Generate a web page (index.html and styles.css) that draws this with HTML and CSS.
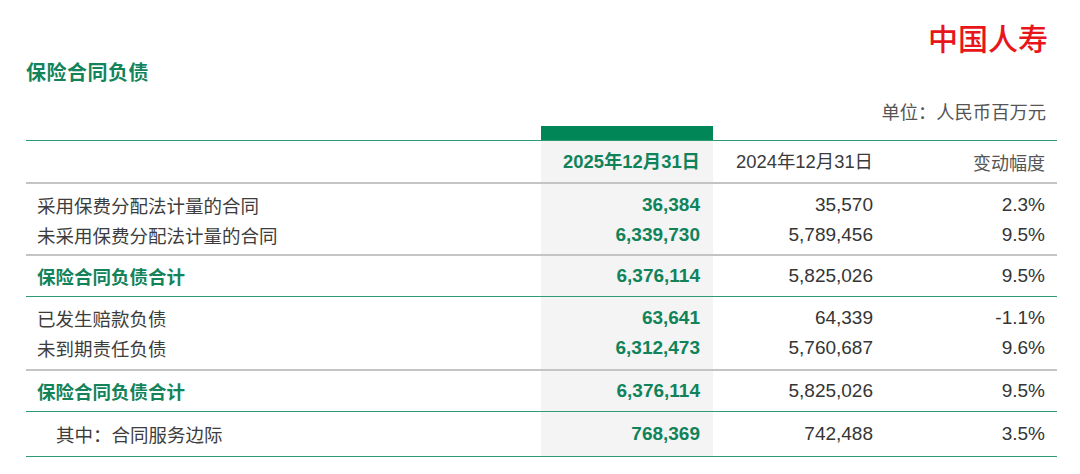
FILE: index.html
```html
<!DOCTYPE html>
<html lang="zh-CN">
<head>
<meta charset="utf-8">
<title>保险合同负债</title>
<link rel="stylesheet" href="styles.css">
</head>
<body>
<div class="page">
  <div class="brand">中国人寿</div>
  <h2 class="title">保险合同负债</h2>
  <div class="unit">单位：人民币百万元</div>
  <table class="sheet">
    <colgroup>
      <col class="c-label"><col class="c-num"><col class="c-num"><col class="c-num">
    </colgroup>
    <tr class="bar-row"><td></td><td class="bar"></td><td></td><td></td></tr>
    <tr class="head">
      <th></th>
      <th class="hl cur">2025年12月31日</th>
      <th>2024年12月31日</th>
      <th class="cjk">变动幅度</th>
    </tr>
    <tr class="row first">
      <td class="label">采用保费分配法计量的合同</td>
      <td class="hl cur">36,384</td><td>35,570</td><td>2.3%</td>
    </tr>
    <tr class="row last">
      <td class="label">未采用保费分配法计量的合同</td>
      <td class="hl cur">6,339,730</td><td>5,789,456</td><td>9.5%</td>
    </tr>
    <tr class="total">
      <td class="label">保险合同负债合计</td>
      <td class="hl cur">6,376,114</td><td>5,825,026</td><td>9.5%</td>
    </tr>
    <tr class="row first">
      <td class="label">已发生赔款负债</td>
      <td class="hl cur">63,641</td><td>64,339</td><td>-1.1%</td>
    </tr>
    <tr class="row last last2">
      <td class="label">未到期责任负债</td>
      <td class="hl cur">6,312,473</td><td>5,760,687</td><td>9.6%</td>
    </tr>
    <tr class="total total2">
      <td class="label">保险合同负债合计</td>
      <td class="hl cur">6,376,114</td><td>5,825,026</td><td>9.5%</td>
    </tr>
    <tr class="sub">
      <td class="label indent">其中：合同服务边际</td>
      <td class="hl cur">768,369</td><td>742,488</td><td>3.5%</td>
    </tr>
  </table>
</div>
</body>
</html>
```
FILE: styles.css
```css
html, body {
  margin: 0;
  padding: 0;
  background: #ffffff;
}
body {
  font-family: "Liberation Sans", "Noto Sans CJK SC", sans-serif;
  color: #353535;
}
.page {
  width: 1031px;
  padding: 20px 0 0 26px;
}
.brand {
  text-align: right;
  padding-right: 9px;
  font-family: "Noto Sans CJK SC", sans-serif;
  font-size: 30px;
  line-height: 34px;
  color: #e8151b;
  font-weight: 500;
}
.title {
  margin: 4px 0 0 0;
  font-family: "Noto Sans CJK SC", sans-serif;
  font-size: 20px;
  line-height: 28px;
  font-weight: 700;
  color: #13845a;
  letter-spacing: 0.5px;
}
.unit {
  margin-top: 13px;
  text-align: right;
  padding-right: 11px;
  font-family: "Noto Sans CJK SC", sans-serif;
  font-size: 18.3px;
  line-height: 24px;
  color: #555555;
}
.sheet {
  margin-top: 3px;
  width: 1031px;
  border-collapse: collapse;
  table-layout: fixed;
  font-size: 19px;
}
.c-label { width: 515px; }
.c-num { width: 172px; }
.sheet td, .sheet th {
  padding: 0 12px 0 0;
  text-align: right;
  white-space: nowrap;
  font-weight: 400;
  line-height: 30px;
}
.bar-row td {
  height: 14px;
  line-height: 14px;
  padding: 0;
}
.bar-row td.bar {
  background: #018657;
}
.head th {
  height: 41px;
  padding-top: 0;
  padding-bottom: 0;
  border-top: 1px solid #2f9a74;
  border-bottom: 2px solid #c4c4c4;
  color: #3a3a3a;
  font-size: 18.4px;
}
.head th.cjk {
  font-family: "Noto Sans CJK SC", sans-serif;
  font-size: 18px;
  color: #555555;
}
.hl {
  background: #f4f4f4;
}
.sheet .cur {
  color: #10835a;
  font-weight: 700;
  padding-right: 13px;
}
.label {
  text-align: left !important;
  padding-left: 11px !important;
  font-family: "Noto Sans CJK SC", sans-serif;
  font-size: 18.5px;
  color: #3d3d3d;
}
.row.first td {
  padding-top: 6px;
}
.row.last td {
  padding-bottom: 4px;
  border-bottom: 2px solid #c4c4c4;
}
.row.last2 td {
  padding-bottom: 6px;
}
.total td {
  height: 40px;
  border-bottom: 1px solid #2f9a74;
}
.total2 td {
  height: 39px;
  line-height: 40px;
}
.total .label {
  color: #13845a;
  font-weight: 700;
}
.sub td {
  height: 41px;
  line-height: 44px;
  border-bottom: 1px solid #2f9a74;
}
.label.indent {
  padding-left: 30px !important;
}
```
